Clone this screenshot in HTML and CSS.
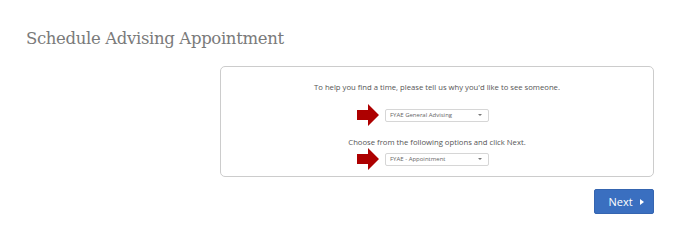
FILE: index.html
```html
<!DOCTYPE html>
<html lang="en-US">
  <head>
    <title>Schedule Advising Appointment</title>
    <meta charset="utf-8" />
    <meta name="viewport" content="width=device-width, initial-scale=1.0" />
    <link rel="stylesheet" href="styles.css">
  </head>
  <body>
    <div class="page">
      <h1 class="page-title">Schedule Advising Appointment</h1>
      <div class="panel">
        <p class="prompt">To help you find a time, please tell us why you'd like to see someone.</p>
        <div class="pick-row pick-first">
          <svg class="pointer" width="22" height="22" viewBox="0 0 22 22">
            <polygon points="0,6 11,6 11,0 22,11 11,22 11,16 0,16" />
          </svg>
          <div class="fake-select">
            <span>FYAE General Advising</span>
            <span class="caret"></span>
          </div>
        </div>
        <p class="prompt prompt-second">Choose from the following options and click Next.</p>
        <div class="pick-row pick-second">
          <svg class="pointer" width="22" height="22" viewBox="0 0 22 22">
            <polygon points="0,6 11,6 11,0 22,11 11,22 11,16 0,16" />
          </svg>
          <div class="fake-select">
            <span>FYAE - Appointment</span>
            <span class="caret"></span>
          </div>
        </div>
      </div>
      <div class="actions">
        <button class="next-btn" type="button">Next <span class="tri"></span></button>
      </div>
    </div>
  </body>
</html>
```

FILE: styles.css
```css
* {
  box-sizing: border-box;
}
body {
  background-color: #fff;
  color: #555;
  font-family: "Open Sans", sans-serif;
  margin: 0;
}
.page {
  padding: 0 46px 0 26px;
}
.page-title {
  font-family: "DejaVu Serif", serif;
  font-weight: normal;
  font-size: 16.5px;
  letter-spacing: -0.35px;
  color: #7a7a7a;
  margin: 0;
  padding-top: 29px;
  height: 66px;
}
.panel {
  margin-left: auto;
  width: 434px;
  height: 111px;
  border: 1px solid #cccccc;
  border-radius: 5px;
  display: flex;
  flex-direction: column;
  align-items: center;
  padding-top: 14px;
}
.prompt {
  margin: 0;
  font-size: 7.7px;
  line-height: 12px;
  color: #555;
}
.pick-row {
  display: flex;
  align-items: center;
  gap: 6px;
  margin-left: -28px;
}
.pick-first {
  margin-top: 11px;
}
.prompt-second {
  margin-top: 10px;
}
.pick-second {
  margin-top: 0;
}
.pointer {
  fill: #ad0000;
}
.fake-select {
  width: 104px;
  height: 13px;
  border: 1px solid #d6d6d6;
  border-radius: 2px;
  display: flex;
  align-items: center;
  justify-content: space-between;
  padding: 0 6px 0 4px;
  font-size: 6px;
  color: #666;
}
.caret {
  width: 0;
  height: 0;
  border-left: 2px solid transparent;
  border-right: 2px solid transparent;
  border-top: 2px solid #777;
}
.actions {
  display: flex;
  justify-content: flex-end;
  margin-top: 12px;
}
.next-btn {
  background-color: #3a6fc0;
  border: 1px solid #3565b0;
  border-radius: 2px;
  color: #fff;
  font-family: "Open Sans", sans-serif;
  font-size: 11px;
  width: 60px;
  height: 25px;
  padding: 0 0 0 4px;
  display: flex;
  align-items: center;
  justify-content: center;
  gap: 7px;
}
.tri {
  width: 0;
  height: 0;
  border-top: 3px solid transparent;
  border-bottom: 3px solid transparent;
  border-left: 4px solid #fff;
}
```
